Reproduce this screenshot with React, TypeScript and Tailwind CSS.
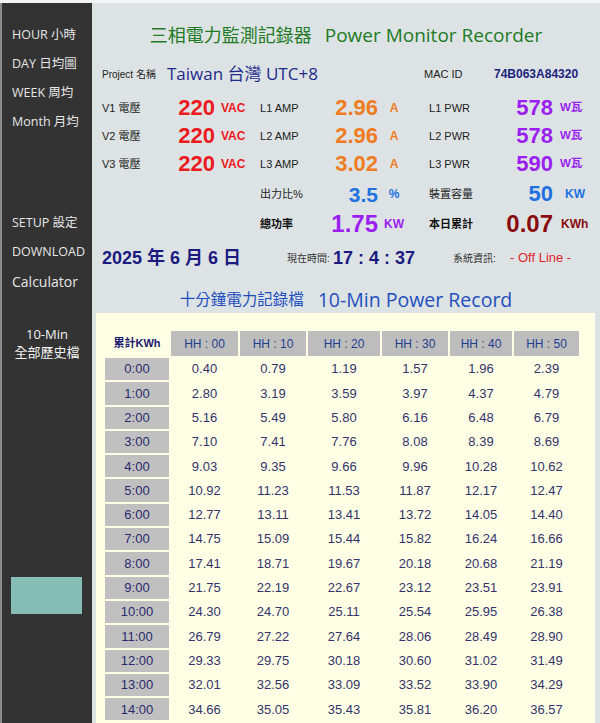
const arial = "font-['Liberation_Sans','Noto_Sans_CJK_TC',sans-serif]";
const segoe = "font-['Open_Sans','Noto_Sans_CJK_TC',sans-serif]";

const menuTop = ["HOUR 小時", "DAY 日均圖", "WEEK 周均", "Month 月均"];
const menuMid = ["SETUP 設定", "DOWNLOAD"];

const records: [string, string[]][] = [
  ["0:00", ["0.40", "0.79", "1.19", "1.57", "1.96", "2.39"]],
  ["1:00", ["2.80", "3.19", "3.59", "3.97", "4.37", "4.79"]],
  ["2:00", ["5.16", "5.49", "5.80", "6.16", "6.48", "6.79"]],
  ["3:00", ["7.10", "7.41", "7.76", "8.08", "8.39", "8.69"]],
  ["4:00", ["9.03", "9.35", "9.66", "9.96", "10.28", "10.62"]],
  ["5:00", ["10.92", "11.23", "11.53", "11.87", "12.17", "12.47"]],
  ["6:00", ["12.77", "13.11", "13.41", "13.72", "14.05", "14.40"]],
  ["7:00", ["14.75", "15.09", "15.44", "15.82", "16.24", "16.66"]],
  ["8:00", ["17.41", "18.71", "19.67", "20.18", "20.68", "21.19"]],
  ["9:00", ["21.75", "22.19", "22.67", "23.12", "23.51", "23.91"]],
  ["10:00", ["24.30", "24.70", "25.11", "25.54", "25.95", "26.38"]],
  ["11:00", ["26.79", "27.22", "27.64", "28.06", "28.49", "28.90"]],
  ["12:00", ["29.33", "29.75", "30.18", "30.60", "31.02", "31.49"]],
  ["13:00", ["32.01", "32.56", "33.09", "33.52", "33.90", "34.29"]],
  ["14:00", ["34.66", "35.05", "35.43", "35.81", "36.20", "36.57"]],
];

const heads = ["HH : 00", "HH : 10", "HH : 20", "HH : 30", "HH : 40", "HH : 50"];

// ── 三相量測列 ────────────────────────────────────────────────

function PhaseRow({ n, amp, pwr }: { n: number; amp: string; pwr: string }) {
  return (
    <div className="flex h-[28px] items-center">
      <div className="w-[60px] text-[11px] text-[#222]">V{n} 電壓</div>
      <div className="w-[53px] text-right text-[22px] font-bold leading-none text-[#ea1a1f]">220</div>
      <div className="w-[45px] pl-[6px] text-[12px] font-bold text-[#ea1a1f]">VAC</div>
      <div className="w-[65px] text-[11px] text-[#222]">L{n} AMP</div>
      <div className="w-[53px] text-right text-[22px] font-bold leading-none text-[#ef7b22]">{amp}</div>
      <div className="w-[51px]">
        <div className="w-[32px] text-center text-[12px] font-bold text-[#ef7b22]">A</div>
      </div>
      <div className="w-[70px] text-[11px] text-[#222]">L{n} PWR</div>
      <div className="w-[54px] text-right text-[22px] font-bold leading-none text-[#9a1ff0]">{pwr}</div>
      <div className="pl-[7px] text-[11.5px] font-bold text-[#9a1ff0]">W瓦</div>
    </div>
  );
}

export default function App() {
  return (
    <div className={`flex h-[723px] w-[600px] overflow-hidden bg-[#f3f5f5] pt-[3px] ${arial}`}>
      {/* 側邊選單 */}
      <aside className={`flex w-[92px] shrink-0 flex-col border-l-2 border-[#8c8c8c] bg-[#333333] pt-[18px] text-[#e6e6e6] ${segoe}`}>
        {menuTop.map((m) => (
          <div key={m} className="flex h-[29px] items-center pl-[10px] text-[12.5px]">
            {m}
          </div>
        ))}
        <div className="mt-[72px]">
          {menuMid.map((m) => (
            <div key={m} className="flex h-[29px] items-center pl-[10px] text-[12.5px]">
              {m}
            </div>
          ))}
          <div className="flex h-[29px] items-center pl-[10px] text-[14px]">Calculator</div>
        </div>
        <div className="mt-[29px] text-center text-[13px] leading-[18px] text-[#f2f2f2]">
          <div>10-Min</div>
          <div>全部歷史檔</div>
        </div>
        <div className="ml-[9px] mt-[216px] h-[37px] w-[71px] bg-[#86bdb5]"></div>
      </aside>

      <main className="flex min-w-0 flex-1 flex-col bg-[#dde3e4]">
        <div className={`mt-[18px] flex h-[28px] items-center justify-center text-[#217a24] ${segoe}`}>
          <span className="text-[18px]">三相電力監測記錄器</span>
          <span className="ml-[13px] text-[19px]">Power Monitor Recorder</span>
        </div>

        <div className="pl-[10px]">
          <div className="mt-[10px] flex h-[30px] items-center">
            <div className="w-[65px] text-[10px] text-[#222]">Project 名稱</div>
            <div className={`w-[257px] text-[17px] text-[#1f2a8c] ${segoe}`}>Taiwan 台灣 UTC+8</div>
            <div className="w-[70px] text-[11px] text-[#222]">MAC ID</div>
            <div className="text-[12px] font-bold text-[#1a1f80]">74B063A84320</div>
          </div>

          <div className="mt-[5px]">
            <PhaseRow n={1} amp="2.96" pwr="578" />
            <PhaseRow n={2} amp="2.96" pwr="578" />
            <PhaseRow n={3} amp="3.02" pwr="590" />
          </div>

          <div className="mt-[1px] flex h-[30px] items-center">
            <div className="w-[158px]"></div>
            <div className="w-[65px] text-[11px] text-[#222]">出力比%</div>
            <div className="w-[53px] text-right text-[21px] font-bold leading-none text-[#2171e0]">3.5</div>
            <div className="w-[51px]">
              <div className="w-[32px] text-center text-[12px] font-bold text-[#2171e0]">%</div>
            </div>
            <div className="w-[70px] text-[11px] text-[#222]">裝置容量</div>
            <div className="w-[54px] text-right text-[22px] font-bold leading-none text-[#2171e0]">50</div>
            <div className="pl-[12px] text-[12px] font-bold text-[#2171e0]">KW</div>
          </div>

          <div className="flex h-[30px] items-center">
            <div className="w-[158px]"></div>
            <div className="w-[65px] text-[11px] font-bold text-[#111]">總功率</div>
            <div className="w-[53px] text-right text-[24px] font-bold leading-none text-[#9a1ff0]">1.75</div>
            <div className="w-[51px] pl-[6px] text-[12px] font-bold text-[#9a1ff0]">KW</div>
            <div className="w-[70px] text-[11px] font-bold text-[#111]">本日累計</div>
            <div className="w-[54px] text-right text-[24px] font-bold leading-none text-[#8a0c0e]">0.07</div>
            <div className="pl-[8px] text-[12px] font-bold text-[#8a0c0e]">KWh</div>
          </div>

          <div className="mt-[4px] flex h-[30px] items-center whitespace-nowrap">
            <div className="w-[185px] text-[18px] font-bold text-[#1a1a80]">2025 年 6 月 6 日</div>
            <div className="w-[46px] text-[10px] text-[#333]">現在時間:</div>
            <div className="w-[120px] text-[18px] font-bold text-[#1a1a80]">17 : 4 : 37</div>
            <div className="w-[57px] text-[10px] text-[#333]">系統資訊:</div>
            <div className="text-[13px] text-[#e0242a]">- Off Line -</div>
          </div>
        </div>

        <div className={`mt-[14px] flex h-[26px] items-center justify-center text-[#1f4fbf] ${segoe}`}>
          <span className="text-[15.5px]">十分鐘電力記錄檔</span>
          <span className="ml-[14px] text-[19.5px]">10-Min Power Record</span>
        </div>

        {/* 十分鐘記錄表 */}
        <div className="ml-[4px] mr-[5px] flex-1 bg-[#ffffe6] pl-[7px] pt-[16px]">
          <table className="table-fixed border-separate border-spacing-[2px]">
            <colgroup>
              <col className="w-[64px]" />
              <col className="w-[67px]" />
              <col className="w-[66px]" />
              <col className="w-[72px]" />
              <col className="w-[66px]" />
              <col className="w-[62px]" />
              <col className="w-[65px]" />
            </colgroup>
            <thead>
              <tr>
                <th className="h-[25px] p-0 text-center text-[11px] font-bold text-[#1a1a70]">累計KWh</th>
                {heads.map((h) => (
                  <th key={h} className="h-[25px] bg-[#bdbdbd] p-0 text-center text-[12px] font-normal text-[#1f3d8f]">
                    {h}
                  </th>
                ))}
              </tr>
            </thead>
            <tbody>
              {records.map(([hr, vals]) => (
                <tr key={hr}>
                  <td className="h-[22.3px] bg-[#c0c0c0] p-0 text-center text-[13px] text-[#2a2a6e]">{hr}</td>
                  {vals.map((v, i) => (
                    <td key={i} className="h-[22.3px] p-0 text-center text-[13px] text-[#33336a]">
                      {v}
                    </td>
                  ))}
                </tr>
              ))}
            </tbody>
          </table>
        </div>
      </main>
    </div>
  );
}
